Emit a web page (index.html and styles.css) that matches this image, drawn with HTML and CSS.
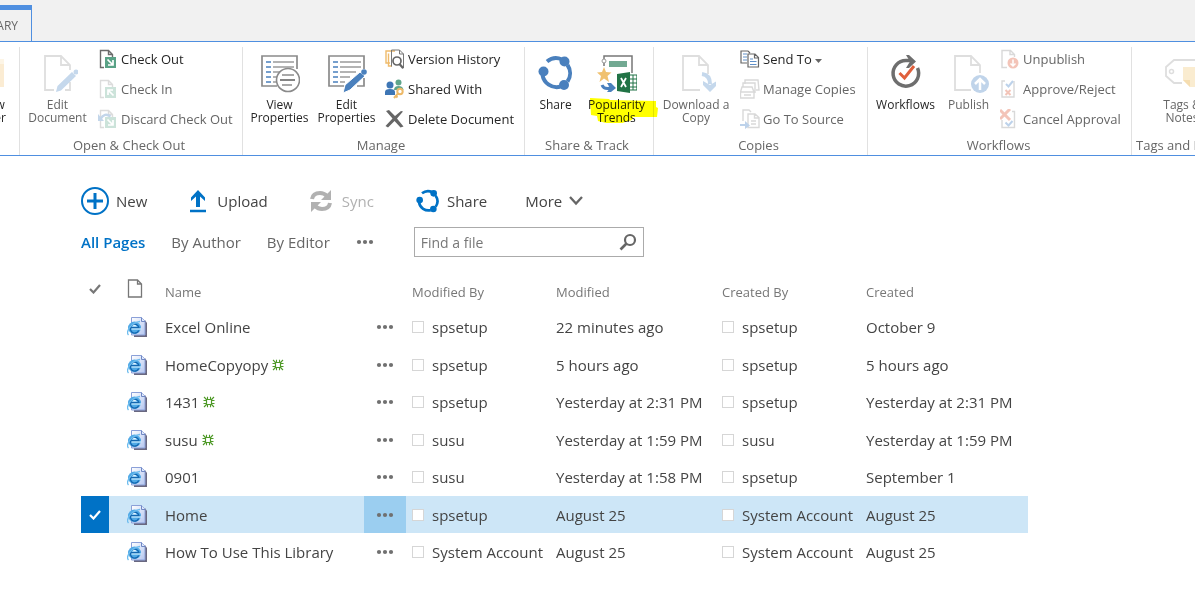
FILE: index.html
```html
<!DOCTYPE html>
<html lang="en">
  <head>
    <meta charset="UTF-8" />
    <meta name="viewport" content="width=device-width, initial-scale=1.0" />
    <title>Pages</title>
    <link rel="stylesheet" href="styles.css" />
  </head>
  <body>
    <!-- shared icons -->
    <svg class="sprite" aria-hidden="true">
      <defs>
        <linearGradient id="pageFill" x1="0" y1="0" x2="1" y2="1">
          <stop offset="0" stop-color="#ffffff" />
          <stop offset="1" stop-color="#b4c6f0" />
        </linearGradient>
      </defs>
      <symbol id="webpage" viewBox="0 0 20 20">
        <path d="M7 3h11l2 3v14H7z" fill="#6a6880" />
        <path d="M4.500 .5h10l3.500 3.500v14H4.500z" fill="url(#pageFill)" stroke="#8ba0d8" />
        <path d="M14.500 .5v4H18" fill="#dfe8fb" stroke="#6f87c4" />
        <ellipse cx="7.500" cy="10.800" rx="6.500" ry="6.200" fill="#4fa9e6" />
        <path d="M11.700 13.500a4.400 4.400 0 1 1 .3-2.700H4" fill="none" stroke="#1467b0" stroke-width="1.400" />
        <path d="M5 9.500q2.500-3.500 5 0z" fill="#e6f6ff" />
        <path d="M4.500 12h10" stroke="#cdeeff" stroke-width="1.200" />
        <path d="M1.500 18C-1.500 14.500 4 5.500 13 4.500" fill="none" stroke="#6dbcee" stroke-width="1.300" />
      </symbol>
      <symbol id="dots" viewBox="0 0 18 6">
        <circle cx="3" cy="3" r="2.100" />
        <circle cx="9" cy="3" r="2.100" />
        <circle cx="15" cy="3" r="2.100" />
      </symbol>
      <symbol id="isnew" viewBox="0 0 12 12">
        <path d="M4 4 1 1M8 4l3-3M4 8l-3 3M8 8l3 3M4.500 3.500V.8M7.500 3.500V.8M4.500 8.500v2.700M7.500 8.500v2.700M3.500 4.500H.5M3.500 7.500H.5M8.500 4.500h3M8.500 7.500h3" stroke="#4f9a28" stroke-width="1.100" />
        <path d="M3.500 3.500h5v5h-5z" fill="#fff" stroke="#4f9a28" stroke-width="1.200" />
      </symbol>
      <symbol id="smallpaper" viewBox="0 0 20 20">
        <path d="M6 18.500H2.500v-17h8l4 4v4M10.500 1.500v4h4" fill="none" stroke="currentColor" stroke-width="1.400" />
      </symbol>
      <symbol id="list" viewBox="0 0 40 40">
        <path d="M37 15V2H2v30h15" fill="none" stroke="#8a8a8a" stroke-width="1.700" />
        <path d="M6 8h5M6 13h5M6 18h5M6 23h5M6 28h5" stroke="#4a80bd" stroke-width="1.600" />
        <path d="M13 8h21M13 13h21M13 18h16M13 23h10M13 28h5" stroke="#9a9a9a" stroke-width="1.300" />
      </symbol>
      <symbol id="ring" viewBox="0 0 36 36">
        <path d="M9 6.500A14.500 14.500 0 0 1 24 4.500M29.500 10A14.500 14.500 0 0 1 29.500 26.500M22 31.800A14.500 14.500 0 0 1 4.500 20" fill="none" stroke="currentColor" stroke-width="4" />
        <circle cx="26.500" cy="6.500" r="5" fill="currentColor" />
        <circle cx="5.500" cy="16.500" r="5" fill="currentColor" />
        <circle cx="26" cy="30" r="5" fill="currentColor" />
      </symbol>
    </svg>

    <header>
      <nav class="tabs">
        <a href="#" class="tab">ARY</a>
      </nav>

      <div class="ribbon">
        <section class="group group-cut">
          <div class="tools">
            <button class="big">
              <svg class="icon-lg" viewBox="0 0 40 40"><path d="M0 5h38v28H0z" fill="#fbecd3" /><path d="M33 5h5v5h-5z" fill="#fdf5e6" /></svg>
              <span>w<br />er</span>
            </button>
          </div>
        </section>

        <section class="group group-open">
          <div class="tools">
            <button class="big off">
              <svg class="icon-lg" viewBox="0 0 40 40">
                <path d="M16 36H7V2h16l9 9v5M23 2v9h9M32 28v8h-5" fill="none" stroke="#dedede" stroke-width="1.800" />
                <path d="m18 38 1.500-6L34 18l4 4-15 14.500z" fill="#c5d8ec" />
                <circle cx="38" cy="18" r="2.500" fill="#c5d8ec" />
              </svg>
              <span>Edit<br />Document</span>
            </button>
            <div class="stack">
              <button>
                <svg class="icon" viewBox="0 0 20 20"><g color="#6b6b6b"><use href="#smallpaper" /></g><path d="M7 8h11v11H7z" fill="#59a286" /><path d="m9.500 10.500 5 5M15 11v5h-5" fill="none" stroke="#fff" stroke-width="1.700" /></svg>
                Check Out
              </button>
              <button class="off">
                <svg class="icon" viewBox="0 0 20 20"><g color="#dcdcdc"><use href="#smallpaper" /></g><path d="M7 8h11v11H7z" fill="#cce3da" /><path d="m15.500 16.500-5-5M10 16v-5h5" fill="none" stroke="#fff" stroke-width="1.700" /></svg>
                Check In
              </button>
              <button class="off">
                <svg class="icon" viewBox="0 0 20 20"><g color="#dcdcdc"><use href="#smallpaper" /></g><path d="M7 8h11v11H7z" fill="#cce3da" /><path d="m9.500 10.500 5 5M15 11v5h-5" fill="none" stroke="#fff" stroke-width="1.700" /><path d="M2.500 10q4-7 10-2.500" fill="none" stroke="#c3d6ea" stroke-width="2.500" /><path d="M0 5v7h6z" fill="#c3d6ea" /></svg>
                Discard Check Out
              </button>
            </div>
          </div>
          <h2>Open &amp; Check Out</h2>
        </section>

        <section class="group group-manage">
          <div class="tools">
            <button class="big">
              <svg class="icon-lg" viewBox="0 0 40 40">
                <use href="#list" />
                <circle cx="28" cy="26" r="11.500" fill="#fff" stroke="#8a8a8a" stroke-width="1.600" />
                <path d="M22 21h12M22 31h10" stroke="#a8a8a8" stroke-width="1.800" />
                <path d="M20 26h15" stroke="#777" stroke-width="1.800" />
              </svg>
              <span>View<br />Properties</span>
            </button>
            <button class="big">
              <svg class="icon-lg" viewBox="0 0 40 40">
                <use href="#list" />
                <path d="M37 24v8h-7" fill="none" stroke="#8a8a8a" stroke-width="1.700" />
                <path d="m16 39 2-8 15-13 5 4-15 14z" fill="#4a80bd" stroke="#fff" />
                <circle cx="37" cy="18" r="2.800" fill="#4a80bd" />
              </svg>
              <span>Edit<br />Properties</span>
            </button>
            <div class="stack">
              <button>
                <svg class="icon" viewBox="0 0 20 20">
                  <path d="M5 14H1V2h9M7 17H3.500V4.500" fill="none" stroke="#efbb6b" stroke-width="1.400" />
                  <path d="M6.500 17.500V1h8l4 4v14H17M14.500 1v4h4" fill="none" stroke="#777" />
                  <circle cx="12" cy="12" r="4" fill="#fff" stroke="#666" stroke-width="1.700" />
                  <path d="m14.500 15 3.500 4" stroke="#666" stroke-width="2.200" />
                </svg>
                Version History
              </button>
              <button>
                <svg class="icon" viewBox="0 0 20 20">
                  <circle cx="13.500" cy="3.500" r="3" fill="#5fa58b" /><path d="M9 11q0-4 4.500-4t5 4z" fill="#5fa58b" />
                  <circle cx="5" cy="6" r="3.500" fill="#3e76b5" /><path d="M0 16v-3q0-3 5-3t5 3v3z" fill="#3e76b5" />
                  <circle cx="15" cy="12.500" r="2.700" fill="#fff" stroke="#edb968" stroke-width="2" /><path d="m13 14.500-4 4.500M10.500 16.500l2 2" stroke="#edb968" stroke-width="2" />
                </svg>
                Shared With
              </button>
              <button>
                <svg class="icon" viewBox="0 0 20 20"><path d="M1 2 4 1l6 6 6-5 2 .5L12 9.500l6.500 8-3 1-6-6.500-6.500 6.500L.5 17l7-7.500z" fill="#666" /></svg>
                Delete Document
              </button>
            </div>
          </div>
          <h2>Manage</h2>
        </section>

        <section class="group group-share">
          <div class="tools">
            <button class="big">
              <svg class="icon-lg" viewBox="0 0 40 40"><g color="#4a80bd"><use href="#ring" x="2" y="1" width="36" height="36" /></g></svg>
              <span>Share</span>
            </button>
            <button class="big marked">
              <svg class="icon-lg" viewBox="0 0 40 40">
                <path d="M7 12V2h28v17" fill="none" stroke="#777" stroke-width="1.500" />
                <circle cx="7" cy="7" r="2" fill="#fff" stroke="#999" />
                <path d="M12 7h18v6H12z" fill="#72a992" />
                <path d="m7 13 2 5 5.500.5-4 3.500 1.500 6L7 24.500 2.500 28 4 22 0 18.500l5-.5z" fill="#f0c16f" />
                <path d="M5 31q2 5 9 3" fill="none" stroke="#4a80bd" stroke-width="3" />
                <path d="M10 29h4l5 5-5 4h-4l3-4z" fill="#4a80bd" />
                <path d="M30 21h10v15H30z" fill="#fff" stroke="#217346" stroke-width="1.200" />
                <path d="M31 25h9M31 29h9M31 33h9M36 21v15" stroke="#217346" />
                <path d="m20 20 13-2v21l-13-2z" fill="#217346" />
                <path d="m24 24 5 9M29 24l-5 9" stroke="#fff" stroke-width="1.800" />
              </svg>
              <span>Popularity<br />Trends</span>
              <svg class="marker" viewBox="0 0 72 30"><path d="M3 1l19 1 1 1 46 1v6l2 1-1 9H46l-1 3-10 3H19l-8-2-1-5-6-1z" fill="#ff0" /></svg>
            </button>
          </div>
          <h2>Share &amp; Track</h2>
        </section>

        <section class="group group-copies">
          <div class="tools">
            <button class="big off">
              <svg class="icon-lg" viewBox="0 0 40 40">
                <path d="M24 36H7V2h16l9 9v9M23 2v9h9" fill="none" stroke="#dedede" stroke-width="1.800" />
                <path d="M26 20q8 1 8 10" fill="none" stroke="#c5d8ec" stroke-width="4" />
                <path d="M27 27l7 4 7-4v4l-7 7-7-7z" fill="#c5d8ec" />
              </svg>
              <span>Download a<br />Copy</span>
            </button>
            <div class="stack">
              <button>
                <svg class="icon" viewBox="0 0 20 20"><path d="M7 14H1V2h7l2 2M8 18V5h7l3.500 3.500V18zM14.500 5v4h4" fill="none" stroke="#666" stroke-width="1.200" /><path d="M3 5h4M3 8h4M3 11h4M10 10h3M10 12.500h6.500M10 15.500h6.500" stroke="#5f8fc8" stroke-width="1.200" /></svg>
                Send To <svg class="caret" viewBox="0 0 7 4"><path d="M0 0h7L3.500 4z" fill="#666" /></svg>
              </button>
              <button class="off">
                <svg class="icon" viewBox="0 0 20 20"><path d="M5 5V1h13l1 10h-3M3 8V4h12v10M.5 19v-6L2 8h10l2 5v6zM1 13h13M4 16h7" fill="none" stroke="#d9d9d9" stroke-width="1.400" /></svg>
                Manage Copies
              </button>
              <button class="off">
                <svg class="icon" viewBox="0 0 20 20"><path d="M3 12V1h6l2 2M8 18.500V5h7l4 3.500v10zM14.500 5v4h4M11 12h5M11 15h5" fill="none" stroke="#d9d9d9" stroke-width="1.400" /><path d="M0 15h5v-3l5 4.500L5 20v-3H0z" fill="#bdd2ea" /></svg>
                Go To Source
              </button>
            </div>
          </div>
          <h2>Copies</h2>
        </section>

        <section class="group group-flows">
          <div class="tools">
            <button class="big">
              <svg class="icon-lg" viewBox="0 0 40 40">
                <path d="M31.500 14A12.800 12.800 0 1 1 20 6.500h5" fill="none" stroke="#6e6e6e" stroke-width="3.500" />
                <path d="M20 1h3l7 6.500-7 6.500h-3l4-6.500z" fill="#6e6e6e" />
                <path d="m13.500 19 5 5 9.500-12" fill="none" stroke="#e0603c" stroke-width="3" />
              </svg>
              <span>Workflows</span>
            </button>
            <button class="big off">
              <svg class="icon-lg" viewBox="0 0 40 40">
                <path d="M22 36H6V2h16l9 9v8M22 2v9h9" fill="none" stroke="#dedede" stroke-width="1.800" />
                <circle cx="31" cy="30" r="9" fill="#c0d4ea" />
                <path d="M31 36V25m-5 5 5-5 5 5" fill="none" stroke="#fff" stroke-width="2.500" />
              </svg>
              <span>Publish</span>
            </button>
            <div class="stack">
              <button class="off">
                <svg class="icon" viewBox="0 0 20 20"><path d="M7 18.500H2v-17h8.500l4 4V8M10 1.500v4h4.500" fill="none" stroke="#d9d9d9" stroke-width="1.400" /><circle cx="13" cy="14" r="5.500" fill="#f3c4b8" /><path d="M13 10.500V17m-2.500-2.500L13 17l2.500-2.500" fill="none" stroke="#fff" stroke-width="1.500" /></svg>
                Unpublish
              </button>
              <button class="off">
                <svg class="icon" viewBox="0 0 20 20"><path d="M5 2H2v16h12V2" fill="none" stroke="#d9d9d9" stroke-width="1.400" /><path d="m6 5 2.500 2.500L13 2" fill="none" stroke="#bdd2ea" stroke-width="2" /><path d="m5.500 11 5 5M10.500 11l-5 5" stroke="#f3c4b8" stroke-width="2" /></svg>
                Approve/Reject
              </button>
              <button class="off">
                <svg class="icon" viewBox="0 0 20 20"><path d="M2 11v7.500h12.500v-16H12" fill="none" stroke="#d9d9d9" stroke-width="1.400" /><path d="m0 1 10 10M10 0 0 10" stroke="#f3c4b8" stroke-width="3" /><path d="m5.500 13.500 3 3 4-4.500" fill="none" stroke="#bdd2ea" stroke-width="2" /></svg>
                Cancel Approval
              </button>
            </div>
          </div>
          <h2>Workflows</h2>
        </section>

        <section class="group group-tags">
          <div class="tools">
            <button class="big off">
              <svg class="icon-lg" viewBox="0 0 40 40">
                <path d="M20 29h-8l-8-7v-9l8-7h28" fill="none" stroke="#dedede" stroke-width="1.800" />
                <circle cx="9.500" cy="17.500" r="2" fill="none" stroke="#dedede" stroke-width="1.500" />
                <path d="M21 13h19v20H28l-7-7z" fill="#faecd0" /><path d="M21 26h7v7z" fill="#f5ddb0" />
              </svg>
              <span>Tags &amp;<br />Notes</span>
            </button>
          </div>
          <h2>Tags and Notes</h2>
        </section>
      </div>
    </header>

    <main>
      <div class="actions">
        <button class="new">
          <svg width="28" height="28" viewBox="0 0 28 28"><circle cx="14" cy="14" r="13" fill="none" stroke="#0072c6" stroke-width="2" /><path d="M14 6v16M6 14h16" stroke="#0072c6" stroke-width="3" /></svg>
          New
        </button>
        <button class="upload">
          <svg width="18" height="24" viewBox="0 0 18 24"><path d="M1 22h16" stroke="#0072c6" stroke-width="2.500" /><path d="M9 1l7 7.500v3.500l-5-4.500V18H7V7.500L2 12V8.500z" fill="#0072c6" /></svg>
          Upload
        </button>
        <button class="sync" disabled>
          <svg width="22" height="24" viewBox="0 0 22 24"><path d="M2 10Q3 4 10 4q4 0 7 3M20 14q-1 6-8 6-4 0-7-3" fill="none" stroke="#b1b1b1" stroke-width="4" /><path d="M21 1v10H11zM1 23V13h10z" fill="#b1b1b1" /></svg>
          Sync
        </button>
        <button class="share">
          <svg width="24" height="24" viewBox="0 0 36 36" color="#0072c6"><use href="#ring" /></svg>
          Share
        </button>
        <button class="more">
          More
          <svg width="14" height="10" viewBox="0 0 14 10"><path d="m1 1 6 6.500L13 1" fill="none" stroke="#666" stroke-width="2.300" /></svg>
        </button>
      </div>

      <div class="views">
        <a href="#" class="current">All Pages</a>
        <a href="#">By Author</a>
        <a href="#">By Editor</a>
        <button class="dots" aria-label="More views"><svg><use href="#dots" /></svg></button>
        <form class="search">
          <input type="text" placeholder="Find a file" aria-label="Find a file" />
          <button type="button" aria-label="Search">
            <svg width="18" height="18" viewBox="0 0 18 18"><circle cx="11" cy="7" r="5" fill="none" stroke="#666" stroke-width="2.200" /><path d="m7.500 10.500-6 6" stroke="#666" stroke-width="2.600" /></svg>
          </button>
        </form>
      </div>

      <table>
        <thead>
          <tr>
            <th class="pick"><svg width="12" height="10" viewBox="0 0 12 10"><path d="m1 5 3.500 3.500L11 1" fill="none" stroke="#777" stroke-width="2.200" /></svg></th>
            <th class="type"><svg width="16" height="19" viewBox="0 0 16 19"><path d="M1.500 1h9l4 4v13h-13zM10.500 1v4h4" fill="none" stroke="#777" stroke-width="1.300" /></svg></th>
            <th class="name">Name</th>
            <th class="menu"></th>
            <th class="by">Modified By</th>
            <th class="modified">Modified</th>
            <th class="creator">Created By</th>
            <th>Created</th>
          </tr>
        </thead>
        <tbody>
          <tr>
            <td class="pick"><input type="checkbox" aria-label="Select Excel Online" /></td>
            <td class="type"><svg><use href="#webpage" /></svg></td>
            <td><a href="#">Excel Online</a></td>
            <td class="menu"><button class="dots" aria-label="Open menu"><svg><use href="#dots" /></svg></button></td>
            <td class="by"><span class="person">spsetup</span></td>
            <td>22 minutes ago</td>
            <td><span class="person">spsetup</span></td>
            <td>October 9</td>
          </tr>
          <tr>
            <td class="pick"><input type="checkbox" aria-label="Select HomeCopyopy" /></td>
            <td class="type"><svg><use href="#webpage" /></svg></td>
            <td><a href="#">HomeCopyopy</a> <svg class="isnew"><use href="#isnew" /></svg></td>
            <td class="menu"><button class="dots" aria-label="Open menu"><svg><use href="#dots" /></svg></button></td>
            <td class="by"><span class="person">spsetup</span></td>
            <td>5 hours ago</td>
            <td><span class="person">spsetup</span></td>
            <td>5 hours ago</td>
          </tr>
          <tr>
            <td class="pick"><input type="checkbox" aria-label="Select 1431" /></td>
            <td class="type"><svg><use href="#webpage" /></svg></td>
            <td><a href="#">1431</a> <svg class="isnew"><use href="#isnew" /></svg></td>
            <td class="menu"><button class="dots" aria-label="Open menu"><svg><use href="#dots" /></svg></button></td>
            <td class="by"><span class="person">spsetup</span></td>
            <td>Yesterday at 2:31 PM</td>
            <td><span class="person">spsetup</span></td>
            <td>Yesterday at 2:31 PM</td>
          </tr>
          <tr>
            <td class="pick"><input type="checkbox" aria-label="Select susu" /></td>
            <td class="type"><svg><use href="#webpage" /></svg></td>
            <td><a href="#">susu</a> <svg class="isnew"><use href="#isnew" /></svg></td>
            <td class="menu"><button class="dots" aria-label="Open menu"><svg><use href="#dots" /></svg></button></td>
            <td class="by"><span class="person">susu</span></td>
            <td>Yesterday at 1:59 PM</td>
            <td><span class="person">susu</span></td>
            <td>Yesterday at 1:59 PM</td>
          </tr>
          <tr>
            <td class="pick"><input type="checkbox" aria-label="Select 0901" /></td>
            <td class="type"><svg><use href="#webpage" /></svg></td>
            <td><a href="#">0901</a></td>
            <td class="menu"><button class="dots" aria-label="Open menu"><svg><use href="#dots" /></svg></button></td>
            <td class="by"><span class="person">susu</span></td>
            <td>Yesterday at 1:58 PM</td>
            <td><span class="person">spsetup</span></td>
            <td>September 1</td>
          </tr>
          <tr class="selected">
            <td class="pick"><input type="checkbox" aria-label="Select Home" checked /><svg class="tick" viewBox="0 0 12 10"><path d="m1 5 3.500 3.500L11 1" fill="none" stroke="#fff" stroke-width="2.200" /></svg></td>
            <td class="type"><svg><use href="#webpage" /></svg></td>
            <td><a href="#">Home</a></td>
            <td class="menu"><button class="dots" aria-label="Open menu"><svg><use href="#dots" /></svg></button></td>
            <td class="by"><span class="person">spsetup</span></td>
            <td>August 25</td>
            <td><span class="person">System Account</span></td>
            <td>August 25</td>
          </tr>
          <tr>
            <td class="pick"><input type="checkbox" aria-label="Select How To Use This Library" /></td>
            <td class="type"><svg><use href="#webpage" /></svg></td>
            <td><a href="#">How To Use This Library</a></td>
            <td class="menu"><button class="dots" aria-label="Open menu"><svg><use href="#dots" /></svg></button></td>
            <td class="by"><span class="person">System Account</span></td>
            <td>August 25</td>
            <td><span class="person">System Account</span></td>
            <td>August 25</td>
          </tr>
        </tbody>
      </table>
    </main>
  </body>
</html>
```
FILE: styles.css
```css
:root {
  --blue: #0072c6;
  --line: #4f8fe0;
  --text: #444;
  --muted: #666;
  --selected: #cde6f7;
}

*,
*::before {
  margin: 0;
  padding: 0;
  box-sizing: border-box;
}

body {
  background: #fff;
  color: var(--text);
  font-family: "Open Sans", "Noto Sans", sans-serif;
  font-size: 15px;
  overflow-x: hidden;
}

button {
  background: none;
  border: none;
  color: inherit;
  font: inherit;
  cursor: pointer;
}

a {
  color: inherit;
  text-decoration: none;
}

.sprite {
  position: absolute;
  width: 0;
  height: 0;
}

/* Tab strip */
.tabs {
  display: flex;
  height: 41px;
  padding-top: 5px;
  background: #f1f1f1;
}

.tab {
  display: flex;
  align-items: center;
  justify-content: flex-end;
  width: 32px;
  padding: 0 13px 0 0;
  border-top: 5px solid var(--line);
  border-right: 1px solid var(--line);
  color: var(--muted);
  font-size: 12px;
}

/* Ribbon */
.ribbon {
  display: flex;
  height: 115px;
  padding-top: 5px;
  border-top: 1px solid var(--line);
  border-bottom: 1px solid var(--line);
  overflow: hidden;
  font-size: 13px;
  color: #262626;
}

.group {
  flex: none;
  display: flex;
  flex-direction: column;
  border-right: 1px solid #e1e1e1;
}

.group h2 {
  margin-top: 4px;
  padding-right: 8px;
  color: var(--muted);
  font-size: 13px;
  font-weight: 400;
  line-height: 20px;
  text-align: center;
  white-space: nowrap;
}

.tools {
  display: flex;
  height: 84px;
}

.big {
  position: relative;
  display: flex;
  flex-direction: column;
  align-items: center;
  gap: 4px;
  width: 67px;
  padding-top: 7px;
  font-size: 12px;
  line-height: 13px;
  white-space: nowrap;
}

.icon-lg {
  flex: none;
  width: 40px;
  height: 40px;
}

.off {
  color: var(--muted);
}

.stack {
  display: flex;
  flex-direction: column;
  gap: 6px;
}

.stack button {
  display: flex;
  align-items: center;
  gap: 3px;
  height: 24px;
  white-space: nowrap;
}

.icon {
  width: 20px;
  height: 20px;
}

.caret {
  width: 7px;
  height: 4px;
  margin-top: 4px;
}

.group-cut {
  width: 20px;
}

.group-cut .big {
  align-items: flex-end;
  width: 6px;
}

.group-open {
  width: 223px;
  padding-left: 4px;
}

.group-open .stack {
  margin-left: 7px;
}

.group-manage {
  width: 282px;
  padding-left: 3px;
}

.group-manage .stack {
  margin-left: 5px;
}

.group-share {
  width: 129px;
}

.group-share h2 {
  padding-right: 4px;
}

.group-share .big {
  width: 61px;
}

.group-copies {
  width: 214px;
  padding-left: 4px;
}

.group-copies .big {
  width: 76px;
}

.group-copies .stack {
  margin-left: 6px;
}

.group-flows {
  width: 264px;
  padding-left: 6px;
}

.group-flows .big {
  width: 63px;
}

.group-tags {
  padding-left: 4px;
  border-right: none;
}

.group-tags .big {
  width: 92px;
}

.marker {
  position: absolute;
  top: 50px;
  left: 1px;
  width: 72px;
  height: 30px;
  mix-blend-mode: multiply;
  pointer-events: none;
}

/* Library */
main {
  padding: 30px 167px 32px 81px;
}

.actions {
  display: flex;
  align-items: center;
  height: 30px;
}

.actions button {
  display: flex;
  align-items: center;
  gap: 7px;
}

.actions .upload {
  margin-left: 42px;
  gap: 10px;
}

.actions .sync {
  margin-left: 42px;
  gap: 10px;
  color: #b1b1b1;
}

.actions .share {
  margin-left: 42px;
}

.actions .more {
  margin-left: 38px;
}

.views {
  display: flex;
  align-items: center;
  gap: 26px;
  height: 30px;
  margin-top: 11px;
  color: var(--muted);
}

.views .current {
  color: var(--blue);
  font-weight: 600;
}

.dots {
  display: flex;
  align-items: center;
  justify-content: center;
}

.dots svg {
  width: 18px;
  height: 6px;
  fill: #707070;
}

.search {
  display: flex;
  align-items: center;
  width: 230px;
  height: 30px;
  margin-left: 14px;
  padding: 0 6px;
  border: 1px solid #ababab;
}

.search input {
  flex: 1;
  min-width: 0;
  border: none;
  outline: none;
  color: var(--muted);
  font: inherit;
  font-size: 14px;
}

.search input::placeholder {
  color: #777;
}

.search svg {
  display: block;
}

table {
  width: 100%;
  margin-top: 18px;
  border-collapse: collapse;
  table-layout: fixed;
}

th {
  height: 33px;
  color: #777;
  font-size: 13px;
  font-weight: 400;
  text-align: left;
}

th.pick,
th.type {
  padding-bottom: 6px;
}

td {
  height: 37px;
  white-space: nowrap;
}

tbody tr:nth-child(odd) td {
  height: 38px;
}

.pick {
  position: relative;
  width: 28px;
  text-align: center;
}

.pick input {
  display: block;
  width: 28px;
  height: 37px;
  appearance: none;
}

.pick input:checked {
  background: var(--blue);
}

.tick {
  position: absolute;
  top: 14px;
  left: 8px;
  width: 12px;
  height: 10px;
  pointer-events: none;
}

.type {
  width: 56px;
  padding-left: 18px;
}

.type svg {
  display: block;
}

td.type svg {
  width: 20px;
  height: 20px;
}

.name {
  width: 199px;
}

.menu {
  width: 42px;
}

.menu .dots {
  width: 42px;
  height: 37px;
}

.by {
  width: 150px;
  padding-left: 6px;
}

.modified {
  width: 166px;
}

.creator {
  width: 144px;
}

.person {
  display: flex;
  align-items: center;
  gap: 8px;
}

.person::before {
  content: "";
  width: 12px;
  height: 12px;
  background: #fff;
  border: 1px solid #d6d6d6;
}

.isnew {
  width: 12px;
  height: 12px;
}

.selected {
  background: var(--selected);
}

.selected .menu {
  background: #9bcef0;
}
```
